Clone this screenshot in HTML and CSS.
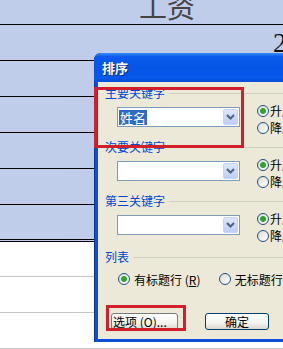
FILE: index.html
```html
<!DOCTYPE html>
<html lang="zh-CN">
<head>
    <meta charset="UTF-8">
    <meta name="viewport" content="width=device-width, initial-scale=1.0">
    <title>排序</title>
    <link rel="stylesheet" href="styles.css">
</head>
<body>

    <div class="screen">
        <div class="sheet">
            <div class="row head"><span class="caption">工资</span></div>
            <div class="row num"><span>2</span></div>
            <div class="row"></div>
            <div class="row"></div>
            <div class="row"></div>
            <div class="row"></div>
            <div class="row last"></div>
            <div class="row plain first"></div>
            <div class="row plain"></div>
            <div class="row plain"></div>
        </div>

        <div class="dialog">
            <div class="titlebar">排序</div>
            <div class="client">

                <div class="group">
                    <div class="legend">主要关键字</div>
                    <div class="field">
                        <div class="combo">
                            <span class="value">姓名</span>
                            <span class="drop"><svg width="9" height="6" viewBox="0 0 9 6"><polyline points="1,1 4.5,4.5 8,1" fill="none" stroke="#4d6185" stroke-width="2"/></svg></span>
                        </div>
                        <div class="order">
                            <label class="opt"><span class="radio on"></span>升序</label>
                            <label class="opt"><span class="radio"></span>降序</label>
                        </div>
                    </div>
                </div>

                <div class="group">
                    <div class="legend">次要关键字</div>
                    <div class="field">
                        <div class="combo">
                            <span class="drop"><svg width="9" height="6" viewBox="0 0 9 6"><polyline points="1,1 4.5,4.5 8,1" fill="none" stroke="#4d6185" stroke-width="2"/></svg></span>
                        </div>
                        <div class="order">
                            <label class="opt"><span class="radio on"></span>升序</label>
                            <label class="opt"><span class="radio"></span>降序</label>
                        </div>
                    </div>
                </div>

                <div class="group">
                    <div class="legend">第三关键字</div>
                    <div class="field">
                        <div class="combo">
                            <span class="drop"><svg width="9" height="6" viewBox="0 0 9 6"><polyline points="1,1 4.5,4.5 8,1" fill="none" stroke="#4d6185" stroke-width="2"/></svg></span>
                        </div>
                        <div class="order">
                            <label class="opt"><span class="radio on"></span>升序</label>
                            <label class="opt"><span class="radio"></span>降序</label>
                        </div>
                    </div>
                </div>

                <div class="group list">
                    <div class="legend">列表</div>
                    <div class="choices">
                        <label class="opt wide"><span class="radio on"></span>有标题行 (<u>R</u>)</label>
                        <label class="opt"><span class="radio"></span>无标题行 (<u>W</u>)</label>
                    </div>
                </div>

                <div class="buttons">
                    <button class="btn options">选项 (<u>O</u>)...</button>
                    <button class="btn ok">确定</button>
                </div>

            </div>
        </div>

        <div class="mark mark-keys"></div>
        <div class="mark mark-opts"></div>
    </div>

</body>
</html>
```

FILE: styles.css
```css
html, body {
    margin: 0;
    padding: 0;
    overflow: hidden;
}
body {
    width: 283px;
    height: 349px;
    font-family: "Noto Sans CJK SC", "Liberation Sans", sans-serif;
    font-size: 12px;
}
.screen {
    position: relative;
    width: 283px;
    height: 349px;
    overflow: hidden;
    background: #fff;
}

/* spreadsheet behind the dialog */
.row {
    height: 35px;
    background: #c0cdea;
    border-bottom: 1px solid #000;
    overflow: hidden;
    white-space: nowrap;
}
.row.head {
    height: 24px;
}
.caption {
    display: block;
    margin-top: -8px;
    padding-left: 139px;
    font-size: 28px;
    line-height: 28px;
    color: #444;
}
.row.num span {
    display: block;
    padding-left: 273px;
    padding-top: 1px;
    font-family: "Liberation Serif", serif;
    font-size: 27px;
    line-height: 35px;
    color: #111;
}
.row.last {
    height: 34px;
    border-bottom: 3px double #000;
}
.row.plain {
    background: #fff;
    border-bottom: 1px solid #c4c4c4;
}
.row.plain.first {
    height: 34px;
}

/* XP style dialog */
.dialog {
    position: absolute;
    left: 94px;
    top: 53px;
    width: 210px;
    height: 289px;
    box-sizing: border-box;
    padding: 0 0 3px 4px;
    background: #0b4fd8;
    border-radius: 7px 7px 0 0;
    box-shadow: inset 1px 0 0 #0a35a8;
    display: flex;
    flex-direction: column;
}
.titlebar {
    height: 29px;
    margin-left: -4px;
    padding-left: 8px;
    line-height: 30px;
    border-radius: 7px 7px 0 0;
    background: linear-gradient(#3a8cf8 0%, #0a5ced 12%, #0554e6 50%, #0658ea 85%, #0a4ed8 100%);
    color: #fff;
    font-weight: bold;
    font-size: 13px;
    text-shadow: 1px 1px 0 #0a2a7a;
}
.client {
    flex: 1;
    background: #ece9d8;
    padding: 4px 0 0 7px;
}

.group {
    margin-bottom: 13px;
}
.legend {
    display: flex;
    align-items: center;
    gap: 4px;
    height: 14px;
    line-height: 14px;
    color: #0046d5;
}
.legend::after {
    content: "";
    flex: 1;
    height: 1px;
    background: #d0d0bf;
}
.field {
    display: flex;
    align-items: flex-start;
    height: 20px;
    margin-top: 7px;
    padding-left: 12px;
}
.combo {
    width: 123px;
    height: 20px;
    box-sizing: border-box;
    border: 1px solid #7f9db9;
    background: #fff;
    display: flex;
    align-items: center;
    padding: 1px;
}
.value {
    background: #316ac5;
    color: #fff;
    font-size: 13px;
    line-height: 15px;
    padding: 0 1px;
    white-space: nowrap;
}
.drop {
    margin-left: auto;
    width: 15px;
    height: 16px;
    box-sizing: border-box;
    border: 1px solid #c3d3fd;
    border-radius: 2px;
    background: linear-gradient(#dde7fe, #bccdf7);
    display: flex;
    align-items: center;
    justify-content: center;
}
.order {
    margin-left: 17px;
    margin-top: -5px;
}
.opt {
    display: flex;
    align-items: center;
    height: 17px;
    white-space: nowrap;
    color: #000;
}
.radio {
    width: 12px;
    height: 12px;
    box-sizing: border-box;
    border: 1px solid #1c5180;
    border-radius: 50%;
    margin-right: 1px;
    background: linear-gradient(135deg, #dcdcd5, #fff);
}
.radio.on {
    background: radial-gradient(circle, #2fa32f 0 2.5px, #8fd28f 3px, transparent 3.5px), linear-gradient(135deg, #dcdcd5, #fff);
}

.group.list {
    margin-top: 15px;
    margin-bottom: 0;
}
.choices {
    display: flex;
    height: 16px;
    margin-top: 7px;
    padding-left: 13px;
}
.choices .opt {
    height: 16px;
}
.opt.wide {
    width: 108px;
}
.choices .radio {
    margin-right: 4px;
}

.buttons {
    display: flex;
    gap: 27px;
    margin-top: 26px;
    padding-left: 6px;
}
.btn {
    height: 17px;
    padding: 0;
    border: 1px solid #003c74;
    border-radius: 3px;
    background: linear-gradient(#fff, #f3f3ef 60%, #dcd9cc);
    font-family: "Noto Sans CJK SC", "Liberation Sans", sans-serif;
    font-size: 12px;
    line-height: 14px;
    color: #000;
}
.btn.options {
    width: 67px;
    text-align: left;
    padding-left: 1px;
    border-color: #7a7a7a;
}
.btn.ok {
    width: 64px;
}

/* red highlight boxes drawn over the screenshot */
.mark {
    position: absolute;
    box-sizing: border-box;
    border: 3px solid #d21f2c;
}
.mark-keys {
    left: 94px;
    top: 87px;
    width: 150px;
    height: 61px;
}
.mark-opts {
    left: 106px;
    top: 305px;
    width: 80px;
    height: 26px;
}
```
